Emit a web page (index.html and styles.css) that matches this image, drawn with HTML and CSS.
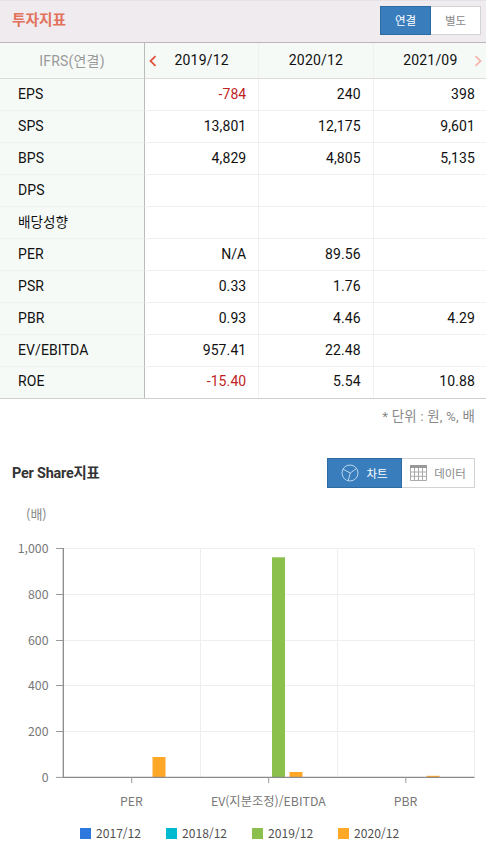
FILE: index.html
```
<!DOCTYPE html>
<html lang="ko">
<head>
    <meta charset="UTF-8">
    <meta name="viewport" content="width=device-width, initial-scale=1.0">
    <title>투자지표</title>
    <link rel="stylesheet" href="styles.css">
</head>
<body>
    <div class="section-head">
        <h1>투자지표</h1>
        <div class="btn-group">
            <button class="btn on">연결</button>
            <button class="btn">별도</button>
        </div>
    </div>

    <table class="indicators">
        <thead>
            <tr>
                <th class="name">IFRS(연결)</th>
                <th>
                    <svg class="arrow prev" width="8" height="12" viewBox="0 0 8 12"><path d="M6.5 1.2L1.5 6l5 4.8"/></svg>
                    2019/12
                </th>
                <th>2020/12</th>
                <th>
                    2021/09
                    <svg class="arrow next" width="8" height="12" viewBox="0 0 8 12"><path d="M1.5 1.2l5 4.8-5 4.8"/></svg>
                </th>
            </tr>
        </thead>
        <tbody>
            <tr><th>EPS</th><td class="minus">-784</td><td>240</td><td>398</td></tr>
            <tr><th>SPS</th><td>13,801</td><td>12,175</td><td>9,601</td></tr>
            <tr><th>BPS</th><td>4,829</td><td>4,805</td><td>5,135</td></tr>
            <tr><th>DPS</th><td></td><td></td><td></td></tr>
            <tr><th class="ko">배당성향</th><td></td><td></td><td></td></tr>
            <tr><th>PER</th><td>N/A</td><td>89.56</td><td></td></tr>
            <tr><th>PSR</th><td>0.33</td><td>1.76</td><td></td></tr>
            <tr><th>PBR</th><td>0.93</td><td>4.46</td><td>4.29</td></tr>
            <tr><th>EV/EBITDA</th><td>957.41</td><td>22.48</td><td></td></tr>
            <tr><th>ROE</th><td class="minus">-15.40</td><td>5.54</td><td>10.88</td></tr>
        </tbody>
    </table>
    <p class="unit">* 단위 : 원, %, 배</p>

    <div class="chart-head">
        <h2>Per Share지표</h2>
        <div class="btn-group view">
            <button class="btn on">
                <svg width="18" height="18" viewBox="0 0 18 18"><circle cx="9" cy="9" r="8"/><path d="M2 5.2L9.3 9l6-4.4M9.3 9L7.2 16.7"/></svg>
                차트
            </button>
            <button class="btn">
                <svg width="17" height="16" viewBox="0 0 17 16"><path d="M.5 .5h16v15H.5zM.5 7h16M.5 11.3h16M4.5 2v13.5M8.5 2v13.5M12.5 2v13.5"/><path class="bar" d="M0 0h17v3H0z"/></svg>
                데이터
            </button>
        </div>
    </div>

    <svg class="chart" width="486" height="322" viewBox="0 496 486 322">
        <text class="axis label" x="26" y="518.5">(배)</text>

        <!-- grid -->
        <path class="grid" d="M63 548.5h411.5V777M63 594.5h411.5M63 640.5h411.5M63 685.5h411.5M63 731.5h411.5M200.5 548v229M337.5 548v229"/>

        <!-- bars -->
        <rect x="152.5" y="757" width="13" height="20" fill="#ffa726"/>
        <rect x="272" y="557.3" width="13" height="219.7" fill="#8bc04c"/>
        <rect x="289.5" y="772" width="13" height="5" fill="#ffa726"/>
        <rect x="426.5" y="775.8" width="13" height="1.2" fill="#ffa726"/>

        <!-- axes -->
        <path class="line" d="M63.3 548v229.3h411.2"/>
        <path class="tick" d="M56 548.5h7M56 594.5h7M56 640.5h7M56 685.5h7M56 731.5h7M56 777.4h7M131.7 777v6M268.7 777v6M405.8 777v6"/>

        <g class="axis" text-anchor="end">
            <text x="48.5" y="552.7">1,000</text>
            <text x="48.5" y="598.7">800</text>
            <text x="48.5" y="644.7">600</text>
            <text x="48.5" y="689.7">400</text>
            <text x="48.5" y="735.7">200</text>
            <text x="48.5" y="781.7">0</text>
        </g>
        <g class="axis" text-anchor="middle">
            <text x="131.3" y="805.5">PER</text>
            <text x="268.3" y="805.5">EV(지분조정)/EBITDA</text>
            <text x="405.5" y="805.5">PBR</text>
        </g>
    </svg>

    <ul class="legend">
        <li class="y2017">2017/12</li>
        <li class="y2018">2018/12</li>
        <li class="y2019">2019/12</li>
        <li class="y2020">2020/12</li>
    </ul>
</body>
</html>
```
FILE: styles.css
```
* {
    margin: 0;
    padding: 0;
    box-sizing: border-box;
}
body {
    width: 486px;
    height: 853px;
    overflow: hidden;
    background: #fff;
    color: #111;
    font-family: Roboto, "Noto Sans CJK KR", sans-serif;
    font-size: 14px;
}
.section-head {
    display: flex;
    justify-content: space-between;
    align-items: center;
    height: 43px;
    padding: 0 5px 3px 12px;
    background: #efebef;
    border-top: 1px solid #e4e2e6;
    border-bottom: 1px solid #bcb6bc;
}
h1 {
    padding-bottom: 3px;
    font-size: 14.7px;
    font-weight: bold;
    color: #e2725b;
}

/* toggle buttons */
.btn-group {
    display: flex;
}
.btn {
    display: flex;
    align-items: center;
    justify-content: center;
    width: 50px;
    height: 29px;
    background: #fff;
    border: 1px solid #d3d3d3;
    border-left: none;
    color: #888;
    font-family: inherit;
    font-size: 11.5px;
}
.btn.on {
    width: 51px;
    background: #397dbd;
    border: 1px solid #2d6ba3;
    color: #fff;
}

/* table */
.indicators {
    width: 488px;
    table-layout: fixed;
    border-spacing: 0;
    border-bottom: 1px solid #cfcfcf;
}
.indicators th,
.indicators td {
    height: 32px;
    padding-bottom: 2px;
    border-bottom: 1px solid #f0f0f0;
    border-right: 1px solid #f0f0f0;
    font-weight: normal;
    letter-spacing: 0.1px;
}
.indicators td {
    padding-right: 12px;
    text-align: right;
}
.indicators thead th {
    position: relative;
    height: 36px;
    background: #f6faf7;
    border-bottom-color: #dcdcdc;
    text-align: center;
    letter-spacing: 0.2px;
}
.indicators thead .name {
    width: 145px;
    color: #999;
    border-right: 1px solid #bbb;
}
.indicators tbody th {
    padding-left: 18px;
    background: #f6faf7;
    border-right: 1px solid #bbb;
    text-align: left;
}
.indicators tbody .ko {
    padding-bottom: 4px;
    font-size: 13.6px;
    letter-spacing: 0;
}
.indicators tbody tr:last-child > * {
    height: 31px;
    padding-bottom: 3px;
    border-bottom: none;
}
.indicators .minus {
    color: #c01f1f;
}
.arrow {
    position: absolute;
    top: 12px;
    fill: none;
    stroke: #e0533c;
    stroke-width: 1.8;
}
.arrow.prev {
    left: 4px;
}
.arrow.next {
    right: 5px;
    stroke: #f3b7ac;
}
.unit {
    height: 36px;
    padding-right: 11px;
    line-height: 35px;
    text-align: right;
    font-size: 13.4px;
    letter-spacing: 0.2px;
    color: #888;
}

/* chart */
.chart-head {
    display: flex;
    justify-content: space-between;
    align-items: center;
    height: 30px;
    margin-top: 23px;
    padding: 0 11px 0 12px;
}
h2 {
    padding-bottom: 3px;
    font-size: 14.4px;
    font-weight: bold;
    letter-spacing: -0.2px;
    color: #333;
}
.view .btn {
    gap: 7px;
    width: 73px;
    height: 30px;
}
.view .btn.on {
    width: 75px;
}
.view svg {
    fill: none;
    stroke: #aaa;
}
.view .on svg {
    stroke: #b9d6f0;
}
.view .bar {
    fill: #999;
    stroke: none;
}
.chart {
    display: block;
    margin-top: 8px;
}
.axis {
    font-family: "Noto Sans CJK KR", sans-serif;
    font-size: 12.3px;
    fill: #777;
}
.axis.label {
    font-size: 13px;
    fill: #888;
}
.grid {
    fill: none;
    stroke: #eee;
}
.line {
    fill: none;
    stroke: #8a8a8a;
    stroke-width: 1.3;
}
.tick {
    stroke: #999;
}
.legend {
    display: flex;
    gap: 25px;
    padding-left: 80px;
    list-style: none;
    font-family: "Noto Sans CJK KR", sans-serif;
    font-size: 12.1px;
    line-height: 30px;
    color: #505050;
}
.legend li {
    display: flex;
    align-items: center;
    gap: 5px;
}
.legend li::before {
    content: "";
    width: 11px;
    height: 11px;
}
.legend .y2017::before {
    background: #2c78dc;
}
.legend .y2018::before {
    background: #00bbd0;
}
.legend .y2019::before {
    background: #8bc04c;
}
.legend .y2020::before {
    background: #ffa726;
}
```
